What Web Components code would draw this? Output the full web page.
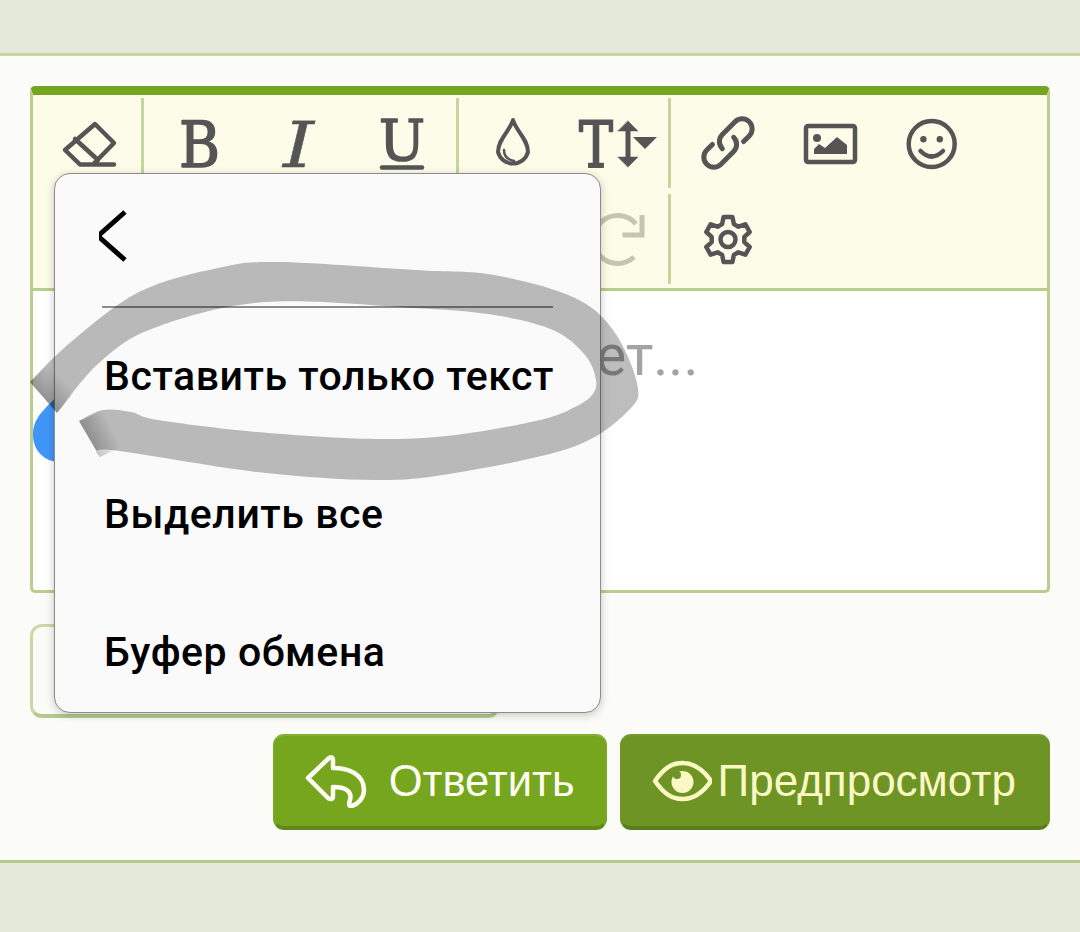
<!DOCTYPE html>
<html lang="ru">
<head>
<meta charset="utf-8">
<title>Ответить</title>
<style>
  html, body { margin: 0; height: 100%; overflow: hidden; background: #fbfcf8; }
</style>
</head>
<body>
<reply-page>
  <reply-editor slot="editor"></reply-editor>
  <context-menu slot="overlay">
    <menu-item>Вставить только текст</menu-item>
    <menu-item>Выделить все</menu-item>
    <menu-item>Буфер обмена</menu-item>
  </context-menu>
  <marker-scribble slot="overlay"></marker-scribble>
  <action-button slot="actions" icon="reply">Ответить</action-button>
  <action-button slot="actions" icon="eye" alt>Предпросмотр</action-button>
</reply-page>

<script>
// page frame: top band, white content, bottom band
class ReplyPage extends HTMLElement {
  constructor() {
    super();
    this.attachShadow({ mode: 'open' }).innerHTML = `
      <style>
        :host { display: flex; flex-direction: column; height: 932px; position: relative; overflow: hidden;
                font-family: Roboto, "Liberation Sans", sans-serif; }
        .band { background: #e5e9da; }
        .band.top { height: 53px; border-bottom: 3px solid #c6d4a2; }
        .band.bottom { flex: 1; border-top: 3px solid #b7c98f; }
        main { background: #fbfcf8; padding: 30px 30px 30px; display: flex; flex-direction: column; height: 744px; }
        .lower { width: 464px; margin-top: 31px; border: 3px solid #c8d8a6; border-bottom-width: 4px;
                 border-bottom-color: #b7c98f; border-radius: 12px; background: #fbfcf8; height: 87px; }
        .actions { display: flex; justify-content: flex-end; gap: 13px; margin-top: 16px; }
      </style>
      <div class="band top"></div>
      <main>
        <slot name="editor"></slot>
        <div class="lower"></div>
        <div class="actions"><slot name="actions"></slot></div>
      </main>
      <div class="band bottom"></div>
      <slot name="overlay"></slot>
    `;
  }
}

// one toolbar button, svg is 101x60
class ToolButton extends HTMLElement {
  constructor() {
    super();
    this.attachShadow({ mode: 'open' }).innerHTML = `
      <style>
        :host { display: flex; width: 101px; height: 90px; align-items: center; justify-content: center; }
        ::slotted(svg) { display: block; width: 101px; height: 60px; overflow: visible; }
      </style>
      <slot></slot>
    `;
  }
}

function gearPath(cx, cy, ro, ri, teeth) {
  let d = '';
  const step = 360 / teeth;
  const pt = (r, a) => {
    const t = a * Math.PI / 180;
    return (cx + r * Math.cos(t)).toFixed(1) + ',' + (cy + r * Math.sin(t)).toFixed(1);
  };
  for (let i = 0; i < teeth; i++) {
    const a = -90 + i * step;
    d += (i ? 'L' : 'M') + pt(ri, a - 21) + ' L' + pt(ro, a - 11) + ' L' + pt(ro, a + 11) + ' L' + pt(ri, a + 21) + ' ';
  }
  return d + 'Z';
}

class ReplyEditor extends HTMLElement {
  constructor() {
    super();
    const glyph = 'font-family="DejaVu Serif" fill="#555" stroke="#555"';
    this.attachShadow({ mode: 'open' }).innerHTML = `
      <style>
        :host { display: block; box-sizing: border-box; height: 507px; border: 3px solid #b9cd8c; border-top: 9px solid #76a523;
                border-radius: 5px; background: #fff; position: relative; overflow: hidden; }
        .toolbar { display: grid; grid-template-columns: 111px 315px 212px 1fr; grid-auto-rows: 96px;
                   background: #fcfce9; border-bottom: 3px solid #b9cd8c; box-sizing: border-box; height: 196px; }
        .group { display: flex; padding-left: 6px; margin: 3px 0; height: 90px; box-sizing: border-box; border-right: 3px solid #c5d59c; }
        .group.g3 { padding-left: 7px; }
        .group.last { border-right: 0; padding-left: 8px; }
        .group.wide { grid-column: 1 / span 3; justify-content: flex-end; padding-right: 0; }
        svg { fill: none; stroke: #555; stroke-width: 4.5; stroke-linejoin: round; stroke-linecap: round; }
        .text { height: 299px; padding: 37px 0 0 563px; box-sizing: border-box; font-family: Roboto, sans-serif;
                font-size: 57px; line-height: 56px; color: #a3a3a3; position: relative; white-space: nowrap; }
        .handle { position: absolute; left: 0; top: 101px; width: 60px; height: 80px; }
      </style>
      <div class="toolbar">
        <div class="group">
          <tool-button><svg viewBox="0 0 101 60">
            <path d="M56,11 L75,30 L54,51.5 L41,51.5 L26,37 Z M36,26 L59,47 M54,51.5 H75"/>
          </svg></tool-button>
        </div>
        <div class="group">
          <tool-button><svg viewBox="0 0 101 60"><text x="29" y="54" font-size="63" textLength="41" lengthAdjust="spacingAndGlyphs" ${glyph} stroke-width="1.6">B</text></svg></tool-button>
          <tool-button><svg viewBox="0 0 101 60"><text x="32" y="54" font-size="63" textLength="31" lengthAdjust="spacingAndGlyphs" font-style="italic" ${glyph} stroke-width="0.4">I</text></svg></tool-button>
          <tool-button><svg viewBox="0 0 101 60">
            <text x="27" y="47" font-size="56" textLength="46" lengthAdjust="spacingAndGlyphs" ${glyph} stroke-width="1.6">U</text>
            <path d="M30,54.5 H70"/>
          </svg></tool-button>
        </div>
        <div class="group g3">
          <tool-button><svg viewBox="0 0 101 60">
            <path d="M47,7 C50,18 62,26 62,39 A15.500,15.500 0 0 1 32,39 C32,26 44,18 47,7 Z" stroke-width="4"/>
            <path d="M38,37 Q38,46 48,48" stroke-width="2.500"/>
          </svg></tool-button>
          <tool-button><svg viewBox="0 0 101 60">
            <text x="12" y="54" font-size="63" textLength="34" lengthAdjust="spacingAndGlyphs" ${glyph} stroke-width="1.800">T</text>
            <path d="M61,8 L71,18 H51 Z M61,54 L71,44 H51 Z" fill="#555" stroke-width="0.5"/>
            <path d="M61,15 V47" stroke-width="5" stroke-linecap="butt"/>
            <path d="M66,24 H90 L78,36 Z" fill="#555" stroke="none"/>
          </svg></tool-button>
        </div>
        <div class="group last">
          <tool-button><svg viewBox="0 0 101 60">
            <g transform="translate(49,30) rotate(-45)" stroke-width="5">
              <path d="M-8,0 A10,10 0 0 1 2,-10 H20 A10,10 0 0 1 20,10 H12"/>
              <path d="M8,0 A10,10 0 0 1 -2,10 H-20 A10,10 0 0 1 -20,-10 H-12"/>
            </g>
          </svg></tool-button>
          <tool-button><svg viewBox="0 0 101 60">
            <rect x="26" y="13" width="49" height="36" rx="2"/>
            <circle cx="37" cy="25" r="4" fill="#555" stroke="none"/>
            <path d="M34,41 V36 L39,31 L45,35 L57,24 L67,32 V41 Z" fill="#555" stroke="none"/>
          </svg></tool-button>
          <tool-button><svg viewBox="0 0 101 60">
            <circle cx="50.700" cy="31" r="23"/>
            <circle cx="42.400" cy="26.300" r="3.200" fill="#555" stroke="none"/>
            <circle cx="58.800" cy="26.300" r="3.200" fill="#555" stroke="none"/>
            <path d="M39.500,38 Q50.700,49 62,38"/>
          </svg></tool-button>
        </div>
        <div class="group wide">
          <tool-button></tool-button>
          <tool-button><svg viewBox="0 0 101 60">
            <path d="M67,48 A24,24 0 1 1 69,15" stroke="#c5c5b2" stroke-linecap="butt" stroke-width="5"/>
            <path d="M75,6 V26 H55.500" stroke="#c5c5b2" stroke-linecap="butt" stroke-linejoin="miter" stroke-width="5"/>
          </svg></tool-button>
        </div>
        <div class="group last">
          <tool-button><svg viewBox="0 0 101 60">
            <path class="gear" d=""/>
            <circle cx="49" cy="30.500" r="7.500"/>
          </svg></tool-button>
        </div>
      </div>
      <div class="text">ет...
        <svg class="handle" viewBox="0 0 60 80" style="stroke:none"><path d="M27,0 C15,16 0,23 0,43 C0,58 11,70 27,70 Z" fill="#4096f8" stroke="none"/></svg>
      </div>
    `;
    this.shadowRoot.querySelector('.gear').setAttribute('d', gearPath(49, 30.5, 23, 16.5, 6));
  }
}

class ContextMenu extends HTMLElement {
  constructor() {
    super();
    this.attachShadow({ mode: 'open' }).innerHTML = `
      <style>
        :host { position: absolute; left: 54px; top: 173px; width: 547px; height: 540px; box-sizing: border-box; display: flex; flex-direction: column;
                background: #fafafa; border: 1px solid #8c8c8c; border-radius: 16px; box-shadow: 0 2px 8px rgba(0,0,0,.22);
                padding: 0 47px 26px 47px; font-family: Roboto, sans-serif; }
        svg { display: block; width: 40px; height: 60px; margin: 33px 0 0 -3px; fill: none; stroke: #000; stroke-width: 5; flex: none; }
        hr { border: 0; height: 2px; background: #8c8c8c; margin: 39px 0 33px 0; width: 451px; flex: none; }
        .items { display: flex; flex-direction: column; gap: 68px; margin-left: 2px; }
      </style>
      <svg viewBox="0 0 40 60"><path d="M25,5 L-2,29 L25,53" transform="translate(1,0)"/></svg>
      <hr>
      <div class="items"><slot></slot></div>
    `;
  }
}

class MenuItem extends HTMLElement {
  constructor() {
    super();
    this.attachShadow({ mode: 'open' }).innerHTML = `
      <style>
        :host { display: flex; align-items: center; height: 70px; font-size: 41px; letter-spacing: .55px; font-weight: 500; color: #000; white-space: nowrap; }
      </style>
      <slot></slot>
    `;
  }
}

// grey marker ring drawn over the screenshot
class MarkerScribble extends HTMLElement {
  constructor() {
    super();
    this.attachShadow({ mode: 'open' }).innerHTML = `
      <style>
        :host { position: absolute; left: 0; top: 0; width: 1080px; height: 932px; pointer-events: none; }
        svg { display: block; width: 1080px; height: 932px; }
      </style>
      <svg viewBox="0 0 1080 932">
        <defs>
          <linearGradient id="t1" gradientUnits="userSpaceOnUse" x1="43" y1="397" x2="62" y2="378">
            <stop offset="0" stop-color="#000" stop-opacity=".22"/><stop offset="1" stop-color="#000" stop-opacity="0"/>
          </linearGradient>
          <linearGradient id="t2" gradientUnits="userSpaceOnUse" x1="90" y1="439" x2="112" y2="428">
            <stop offset="0" stop-color="#000" stop-opacity=".22"/><stop offset="1" stop-color="#000" stop-opacity="0"/>
          </linearGradient>
        </defs>
        <path class="ring" fill="#000" fill-opacity=".26"/>
        <path d="M30,382 L57,413 L75,392 L50,362 Z" fill="url(#t1)"/>
        <path d="M79,421 L100,457 L125,445 L104,410 Z" fill="url(#t2)"/>
      </svg>
    `;
    const outer = [[30,382],[71,342],[139,292],[218,268],[277,262],[415,270],[494,275],[573,297],[613,330],[637,383],[629,410],[573,447],[455,473],[376,480],[257,472],[111,450],[100,457]];
    const inner = [[79,421],[103,410],[131,412],[158,420],[257,432],[376,439],[455,435],[540,420],[575,407],[592,395],[596,380],[585,355],[553,330],[494,315],[415,308],[265,302],[154,328],[99,363],[57,413]];
    // catmull-rom through the measured points
    const edge = (pts, cmd) => {
      let d = cmd + pts[0].join(',');
      for (let i = 0; i < pts.length - 1; i++) {
        const a = pts[Math.max(i - 1, 0)], b = pts[i], c = pts[i + 1], e = pts[Math.min(i + 2, pts.length - 1)];
        const c1 = [b[0] + (c[0] - a[0]) / 6, b[1] + (c[1] - a[1]) / 6];
        const c2 = [c[0] - (e[0] - b[0]) / 6, c[1] - (e[1] - b[1]) / 6];
        d += ' C' + c1.join(',') + ' ' + c2.join(',') + ' ' + c.join(',');
      }
      return d;
    };
    this.shadowRoot.querySelector('.ring').setAttribute('d', edge(outer, 'M') + ' ' + edge(inner, 'L') + ' Z');
  }
}

class ActionButton extends HTMLElement {
  constructor() {
    super();
    const icons = {
      reply: `<svg width="62" height="54" viewBox="0 0 62 54" fill="none" stroke="currentColor" stroke-width="4.5" stroke-linejoin="round" stroke-linecap="round">
        <path d="M3,24 L24,4 Q28,2 28,6 L28,14 C45,14 59,21 59,36 C59,44 53,50 47,52 C43,53 44,49 45,46 C47,39 43,33 28,33 L28,42 Q28,47 23,44 Z"/></svg>`,
      eye: `<svg width="60" height="60" viewBox="0 0 60 60" fill="none" stroke="currentColor" stroke-width="4.5" stroke-linejoin="round">
        <path d="M3,30 C12,17 20,12 30.500,12 C41,12 50,17 59,30 C50,43 41,48 30.500,48 C20,48 12,43 3,30 Z"/>
        <circle cx="30.500" cy="31" r="11" fill="currentColor" stroke="none"/>
        <circle cx="25" cy="24" r="4" fill="#6f9426" stroke="none"/></svg>`
    };
    const alt = this.hasAttribute('alt');
    this.attachShadow({ mode: 'open' }).innerHTML = `
      <style>
        :host { display: flex; align-items: center; box-sizing: border-box; height: 96px; border-radius: 11px;
                padding: 0 ${alt ? '32px' : '30px'} 0 30px; font-family: "Liberation Sans", sans-serif; font-size: ${alt ? '44px' : '43.5px'};
                background: ${alt ? '#6f9426' : '#76a61e'}; color: ${alt ? '#fbf8c4' : '#fdfdf3'};
                border: 2px solid ${alt ? '#6f9426' : '#78a825'}; border-top-color: ${alt ? '#76992e' : '#82b032'}; border-bottom: 4px solid ${alt ? '#5c7d1e' : '#5f8a1a'}; }
        svg { display: block; flex: none; margin-right: ${alt ? '6px' : '22px'}; }
      </style>
      ${icons[this.getAttribute('icon')]}
      <slot></slot>
    `;
  }
}

customElements.define('reply-page', ReplyPage);
customElements.define('tool-button', ToolButton);
customElements.define('reply-editor', ReplyEditor);
customElements.define('context-menu', ContextMenu);
customElements.define('menu-item', MenuItem);
customElements.define('marker-scribble', MarkerScribble);
customElements.define('action-button', ActionButton);
</script>
</body>
</html>
